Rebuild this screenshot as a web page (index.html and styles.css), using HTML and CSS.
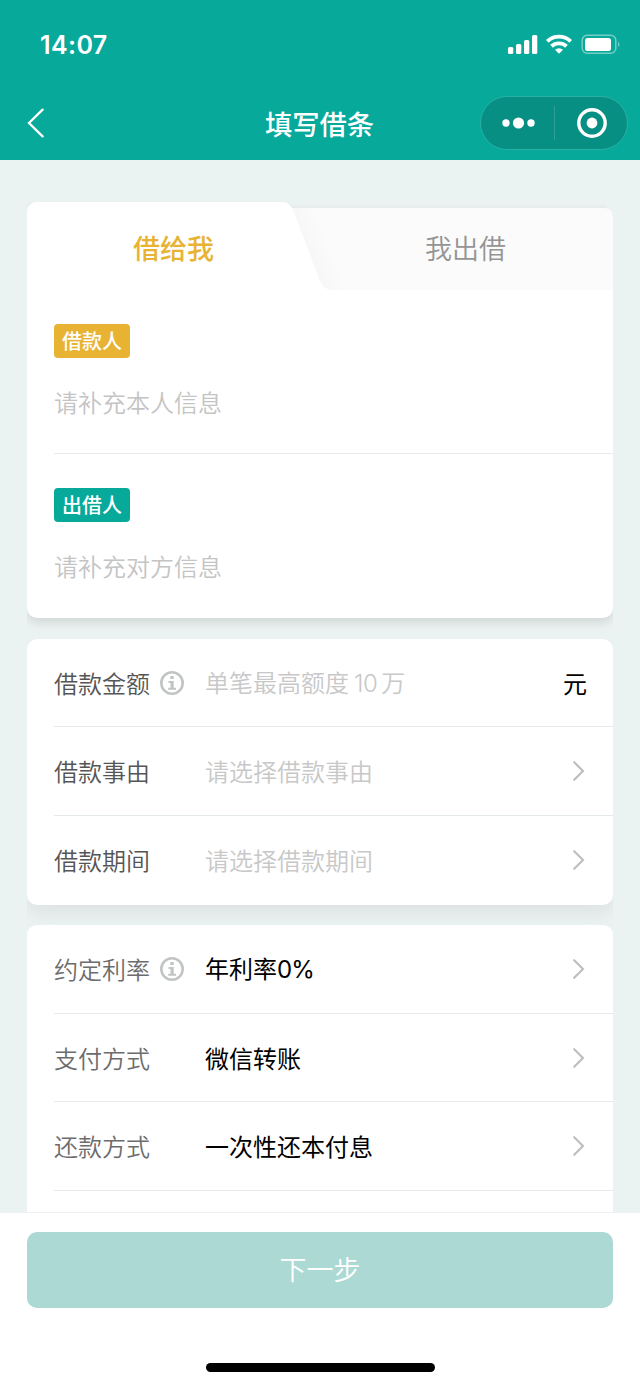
FILE: index.html
```html
<!DOCTYPE html>
<html lang="zh-CN">
<head>
<meta charset="utf-8">
<title>填写借条</title>
<link rel="stylesheet" href="styles.css">
</head>
<body>
<svg class="defs" width="0" height="0" aria-hidden="true">
  <symbol id="info" viewBox="0 0 24 24"><circle cx="12" cy="12" r="10.7" fill="none" stroke="currentColor" stroke-width="2.6"/><path d="M10.3 5h3.4v3.1h-3.4zM8.6 10h5.100v6.700H16v2.100H8.200v-2.100h2.300v-4.600H8.600z" fill="currentColor"/></symbol>
  <symbol id="arrow" viewBox="0 0 12 20"><path d="M1.2 1.2L10 10L1.2 18.8" fill="none" stroke="currentColor" stroke-width="2.1" stroke-linecap="round" stroke-linejoin="miter"/></symbol>
</svg>
<div class="app">
  <header class="header">
    <div class="status">
      <span class="time">14:07</span>
      <svg class="indicators" width="114" height="22" viewBox="0 0 114 22">
        <g fill="#fff">
          <rect x="1" y="13" width="5.3" height="7" rx="1.5"/>
          <rect x="9" y="10" width="5.3" height="10" rx="1.5"/>
          <rect x="17" y="6" width="5.3" height="14" rx="1.500"/>
          <rect x="25" y="1" width="5.3" height="19" rx="1.5"/>
          <path d="M52 19.800l-4-4a6 6 0 0 1 8 0z"/>
          <rect x="78" y="4" width="26" height="13" rx="2.5"/>
        </g>
        <path d="M40.300 7.300a17 17 0 0 1 23.400 0M44.500 12.300a11 11 0 0 1 15 0" fill="none" stroke="#fff" stroke-width="3.9"/>
        <rect x="75.2" y="1.2" width="33.6" height="18" rx="5" fill="none" stroke="#75cec5" stroke-width="1.5"/>
        <path d="M111 7.5q3 2.8 0 5.6z" fill="#75cec5"/>
      </svg>
    </div>
    <div class="nav">
      <svg class="back" width="18" height="30" viewBox="0 0 18 30"><path d="M15.6 1.6L2 15L15.6 28.4" fill="none" stroke="#fff" stroke-width="2.3" stroke-linecap="round"/></svg>
      <h1 class="title">填写借条</h1>
      <div class="capsule">
        <svg class="dots" width="34" height="14" viewBox="0 0 34 14" fill="#fff"><circle cx="5" cy="7" r="3.7"/><circle cx="17.5" cy="7" r="5.6"/><circle cx="30" cy="7" r="3.7"/></svg>
        <span class="split"></span>
        <svg class="target" width="32" height="32" viewBox="0 0 32 32"><circle cx="16" cy="16" r="13.2" fill="none" stroke="#fff" stroke-width="3.4"/><circle cx="16" cy="16" r="5.4" fill="#fff"/></svg>
      </div>
    </div>
  </header>

  <main class="content">
    <section class="card people">
      <div class="tabs">
        <svg class="tabshape" width="586" height="88" viewBox="0 0 586 88">
          <defs>
            <linearGradient id="fold" gradientUnits="userSpaceOnUse" x1="279" y1="44" x2="300" y2="36"><stop offset="0" stop-color="#f7f7f7"/><stop offset="1" stop-color="#fbfbfb"/></linearGradient>
            <linearGradient id="lip" x1="0" y1="0" x2="0" y2="1"><stop offset="0" stop-color="#ebf2f2"/><stop offset="1" stop-color="#e4eae9"/></linearGradient>
          </defs>
          <path d="M255 0H586V16H255z" fill="#ebf2f2"/>
          <path d="M255 1H580V7H255z" fill="url(#lip)"/>
          <path d="M255 6H577Q586 6 586 15V88H255z" fill="url(#fold)"/>
          <path d="M0 0H255Q262 0 265.500 7L293 79Q297 88 305 88H0z" fill="#fff"/>
        </svg>
        <span class="tab active">借给我</span>
        <span class="tab">我出借</span>
      </div>
      <div class="person">
        <span class="badge gold">借款人</span>
        <span class="hint">请补充本人信息</span>
      </div>
      <div class="person last">
        <span class="badge teal">出借人</span>
        <span class="hint">请补充对方信息</span>
      </div>
    </section>

    <section class="card loan">
      <div class="row"><span class="label">借款金额<svg class="info"><use href="#info"/></svg></span><span class="value hint">单笔最高额度<span class="num">10</span>万</span><span class="unit">元</span></div>
      <div class="row"><span class="label">借款事由</span><span class="value hint">请选择借款事由</span><svg class="arrow"><use href="#arrow"/></svg></div>
      <div class="row"><span class="label">借款期间</span><span class="value hint">请选择借款期间</span><svg class="arrow"><use href="#arrow"/></svg></div>
    </section>

    <section class="card terms">
      <div class="row"><span class="label">约定利率<svg class="info"><use href="#info"/></svg></span><span class="value">年利率<span class="rate">0%</span></span><svg class="arrow"><use href="#arrow"/></svg></div>
      <div class="row"><span class="label">支付方式</span><span class="value">微信转账</span><svg class="arrow"><use href="#arrow"/></svg></div>
      <div class="row"><span class="label">还款方式</span><span class="value">一次性还本付息</span><svg class="arrow"><use href="#arrow"/></svg></div>
      <div class="row"></div>
    </section>
  </main>

  <footer class="footer">
    <button class="next">下一步</button>
    <div class="home"></div>
  </footer>
</div>
</body>
</html>
```
FILE: styles.css
```css
* { box-sizing: border-box; }
body { margin: 0; font-family: "Noto Sans CJK SC", sans-serif; }
.defs { position: absolute; }
.app { width: 640px; height: 1386px; display: flex; flex-direction: column; overflow: hidden; background: #ebf2f2; }

.header { height: 160px; flex: none; background: #07a99b; color: #fff; }
.status { height: 86px; padding: 4px 20px 0 40px; display: flex; align-items: center; justify-content: space-between; }
.time { font: 600 25px/30px Inter, sans-serif; letter-spacing: 0.4px; }
.indicators { margin-right: -1px; }
.nav { height: 74px; padding: 0 12px 0 27px; display: grid; grid-template-columns: 148px 1fr 148px; align-items: center; }
.title { margin: 0 16px 1px 0; text-align: center; font-size: 27.3px; line-height: 40px; font-weight: 500; white-space: nowrap; }
.back { display: block; }
.capsule { width: 148px; height: 54px; border: 1px solid #28b1a5; border-radius: 27px; background: #078f84; display: flex; align-items: center; padding: 0 20px; }
.split { width: 1px; height: 34px; margin: 0 21px 0 19px; background: #2d9f96; flex: none; }
.dots, .target { flex: none; }

.content { flex: 1; min-height: 0; overflow: hidden; padding: 42px 27px 0; display: flex; flex-direction: column; gap: 20px; }
.card { flex: none; background: #fff; border-radius: 10px; clip-path: inset(0 0 -21px 0); }
.loan { box-shadow: 0 8px 18px #dce2e0; }
.people { height: 416px; margin-bottom: 1px; box-shadow: 0 5px 10px #d2d8d6; }
.tabs { position: relative; height: 88px; display: grid; grid-template-columns: 1fr 1fr; align-items: center; overflow: hidden; border-radius: 10px 0 0 0; }
.tabshape { position: absolute; inset: 0; }
.people { border-top-right-radius: 0; }
.tab { position: relative; text-align: center; font-size: 27px; line-height: 40px; color: #949494; padding: 4px 2px 0 0; font-weight: 350; }
.active { color: #e8b333; font-weight: 500; padding-right: 0; }
.person { height: 164px; margin-left: 27px; padding-top: 34px; display: flex; flex-direction: column; align-items: flex-start; gap: 26px; border-bottom: 1px solid #e7ebeb; }
.last { border: 0; }
.badge { width: 76px; height: 34px; border-radius: 4px; color: #fff; font-size: 20px; line-height: 33px; font-weight: 500; text-align: center; }
.gold { background: #e8b333; }
.teal { background: #07a99b; }
.hint { color: #c4c4c4; font-size: 24px; line-height: 36px; font-weight: 350; }

.row { height: 88.7px; margin-left: 27px; padding-right: 27px; display: flex; align-items: center; border-bottom: 1px solid #e4e9e9; font-size: 24px; line-height: 36px; }
.row:last-child { border-bottom: 0; }
.loan .row:first-child { height: 88px; }
.loan .row:last-child { height: 89.4px; padding-bottom: 1px; }
.label { width: 151px; display: flex; align-items: center; color: #555; font-weight: 350; }
.terms .label { color: #6c6c6c; }
.info { width: 24px; height: 24px; margin-left: 10px; color: #c0c5c4; }
.value { flex: 1; color: #000; white-space: nowrap; }
.value.hint { color: #c8c8c8; }
.num { font-family: Inter, sans-serif; font-weight: 300; margin: 0 4px 0 5px; letter-spacing: -0.5px; }
.rate { font-family: Inter, sans-serif; letter-spacing: -0.8px; }
.unit { color: #000; margin-right: -1px; }
.arrow { width: 12px; height: 20px; margin-right: 1px; color: #bdbdbd; }

.footer { flex: none; height: 174px; border-top: 1px solid #eef1f1; background: #fff; padding: 19px 27px 0; display: flex; flex-direction: column; align-items: center; }
.next { width: 586px; height: 76px; border: 0; border-radius: 10px; background: #acd9d4; color: #fff; font-family: inherit; font-size: 27px; font-weight: 350; padding: 0 0 4px; }
.home { width: 229px; height: 9px; margin-top: 55px; border-radius: 5px; background: #000; }
```
